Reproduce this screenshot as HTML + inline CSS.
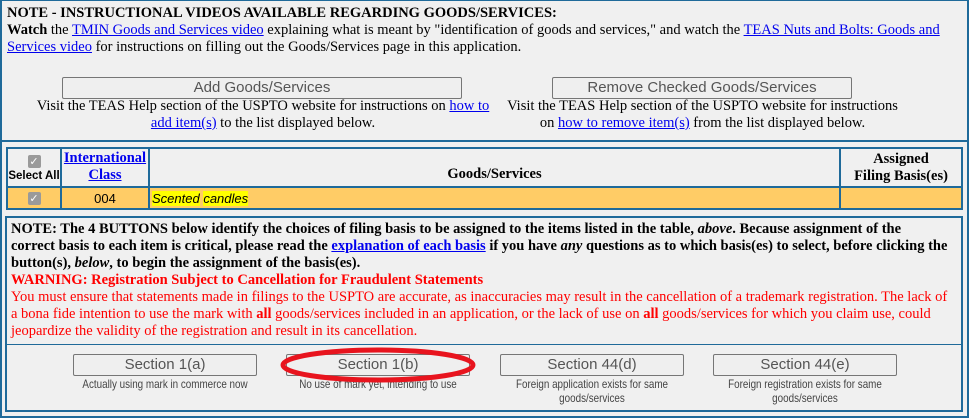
<!DOCTYPE html>
<html><head><meta charset="utf-8"><style>
*{margin:0;padding:0;box-sizing:border-box}
body{width:969px;height:418px;background:#f0f0f0;font-family:"Liberation Serif",serif;font-size:14.5px;color:#000;position:relative;overflow:hidden}
a{color:#0000ee;text-decoration:underline}
.abs{position:absolute}
.bx{border:2px solid #1f6a9a}
.btn{position:absolute;border:1px solid #767676;background:#efefef;border-radius:2px;font-family:"Liberation Sans",sans-serif;font-size:15px;color:#555;text-align:center;height:22px;line-height:20px}
.cap{position:absolute;font-family:"Liberation Sans",sans-serif;font-size:12px;color:#444;text-align:center;line-height:14px;transform:scaleX(.82)}
.tbl{position:absolute;left:6px;top:147px;width:957px;border-collapse:collapse}
.tbl td{border:2px solid #1f6a9a;padding:0}
.cb{display:inline-block;width:13px;height:13px;background:#9a9a9a;border-radius:2px;color:#fff;font-size:11px;line-height:13px;text-align:center;font-family:"DejaVu Sans",sans-serif;font-weight:bold}
</style></head><body>
<div class="abs bx" style="left:0;top:0;width:969px;height:142px;border-top:1px solid #1f6a9a"></div>
<div class="abs" style="left:7px;top:5px;width:955px;line-height:17px">
<b>NOTE - INSTRUCTIONAL VIDEOS AVAILABLE REGARDING GOODS/SERVICES:</b><br>
<b>Watch</b> the <a>TMIN Goods and Services video</a> explaining what is meant by "identification of goods and services," and watch the <a>TEAS Nuts and Bolts: Goods and Services video</a> for instructions on filling out the Goods/Services page in this application.
</div>
<div class="btn" style="left:62px;top:77px;width:400px">Add Goods/Services</div>
<div class="abs" style="left:28px;top:98px;width:470px;text-align:center;line-height:17px">Visit the TEAS Help section of the USPTO website for instructions on <a>how to add item(s)</a> to the list displayed below.</div>
<div class="btn" style="left:552px;top:77px;width:300px">Remove Checked Goods/Services</div>
<div class="abs" style="left:500px;top:98px;width:405px;text-align:center;line-height:17px">Visit the TEAS Help section of the USPTO website for instructions on <a>how to remove item(s)</a> from the list displayed below.</div>

<div class="abs" style="left:0;top:142px;width:969px;height:276px;border-left:2px solid #1f6a9a;border-right:2px solid #1f6a9a;border-bottom:2px solid #1f6a9a"></div>
<table class="tbl">
<tr style="height:39px"><td style="width:54px;text-align:center;font-family:'Liberation Sans',sans-serif;font-size:11.5px;font-weight:bold;vertical-align:bottom;line-height:14px;padding-bottom:3px"><span class="cb">✓</span><br>Select All</td>
<td style="width:88px;text-align:center;font-weight:bold;line-height:17px;vertical-align:top;padding-top:1px"><a>International Class</a></td>
<td style="text-align:center;font-weight:bold;vertical-align:bottom;padding-bottom:3px">Goods/Services</td>
<td style="width:122px;text-align:center;font-weight:bold;line-height:17px;vertical-align:top;padding-top:2px">Assigned<br>Filing Basis(es)</td></tr>
<tr style="height:22px;background:#ffcc66"><td style="text-align:center"><span class="cb">✓</span></td>
<td style="text-align:center;font-family:'Liberation Sans',sans-serif;font-size:13px">004</td>
<td style="font-family:'Liberation Sans',sans-serif;font-size:13px;font-style:italic;padding-left:2px"><span style="background:#ffff00">Scented</span> <span style="background:#ffff00">candles</span></td><td></td></tr>
</table>

<div class="abs bx" style="left:5px;top:216px;width:958px;height:196px"></div>
<div class="abs" style="left:6px;top:344px;width:956px;height:1px;background:#1f6a9a"></div>
<div class="abs" style="left:11px;top:221px;width:955px;line-height:17px;white-space:nowrap">
<b>NOTE: The 4 BUTTONS below identify the choices of filing basis to be assigned to the items listed in the table, <i>above</i>. Because assignment of the<br>correct basis to each item is critical, please read the <a>explanation of each basis</a> if you have <i>any</i> questions as to which basis(es) to select, before clicking the<br>button(s), <i>below</i>, to begin the assignment of the basis(es).</b><br>
<span style="color:#f00"><b>WARNING: Registration Subject to Cancellation for Fraudulent Statements</b><br>
You must ensure that statements made in filings to the USPTO are accurate, as inaccuracies may result in the cancellation of a trademark registration. The lack of<br>a bona fide intention to use the mark with <b>all</b> goods/services included in an application, or the lack of use on <b>all</b> goods/services for which you claim use, could<br>jeopardize the validity of the registration and result in its cancellation.</span>
</div>

<div class="btn" style="left:73px;top:354px;width:184px">Section 1(a)</div>
<div class="cap" style="left:45px;top:377px;width:240px">Actually using mark in commerce now</div>
<div class="btn" style="left:286px;top:354px;width:184px">Section 1(b)</div>
<div class="cap" style="left:258px;top:377px;width:240px">No use of mark yet, intending to use</div>
<div class="btn" style="left:500px;top:354px;width:184px">Section 44(d)</div>
<div class="cap" style="left:487px;top:377px;width:210px">Foreign application exists for same goods/services</div>
<div class="btn" style="left:713px;top:354px;width:184px">Section 44(e)</div>
<div class="cap" style="left:700px;top:377px;width:210px">Foreign registration exists for same goods/services</div>
<svg class="abs" style="left:278px;top:346px" width="200" height="38"><ellipse cx="100" cy="19" rx="95" ry="15" fill="none" stroke="#e8141e" stroke-width="5"/></svg>
</body></html>
